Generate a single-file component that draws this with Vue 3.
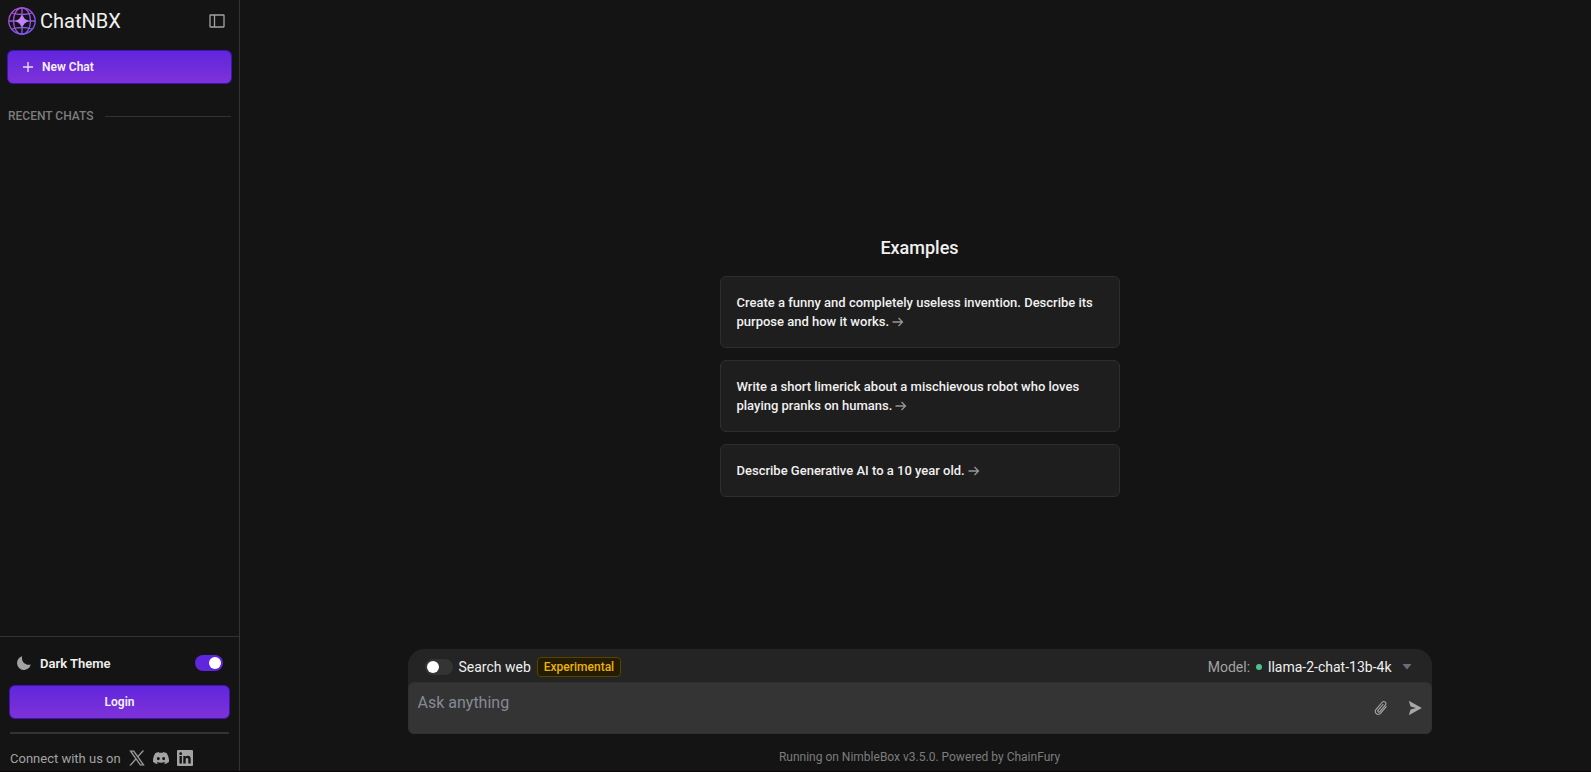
<script setup>
import { ref } from 'vue'

const darkTheme = ref(true)
const searchWeb = ref(false)
const message = ref('')
const examples = [
  'Create a funny and completely useless invention. Describe its purpose and how it works.',
  'Write a short limerick about a mischievous robot who loves playing pranks on humans.',
  'Describe Generative AI to a 10 year old.',
]
</script>

<template>
  <div class="app">
    <aside class="sidebar">
      <header class="brand">
        <svg class="logo" viewBox="0 0 28 28" fill="none" aria-hidden="true">
          <defs>
            <linearGradient id="globe" x1="4" y1="2" x2="24" y2="26" gradientUnits="userSpaceOnUse">
              <stop stop-color="#b04fd8" />
              <stop offset="1" stop-color="#7a5cf0" />
            </linearGradient>
            <linearGradient id="spark" x1="9" y1="9" x2="19" y2="19" gradientUnits="userSpaceOnUse">
              <stop stop-color="#dc7cf4" />
              <stop offset="1" stop-color="#a98bff" />
            </linearGradient>
          </defs>
          <g stroke="url(#globe)" stroke-width="1.3">
            <circle cx="14" cy="14" r="13.2" />
            <ellipse cx="14" cy="14" rx="8.5" ry="13.2" />
            <path d="M14 1v8M14 19v8M1 14h8M19 14h8" />
            <path d="M4 6Q14 9 24 6M4 22Q14 19 24 22" />
          </g>
          <path d="M14 9Q15.500 12.700 19 14Q15.500 15.500 14 19Q12.500 15.500 9 14Q12.500 12.700 14 9Z" fill="url(#spark)" stroke="url(#spark)" stroke-width="1.6" stroke-linejoin="round" />
        </svg>
        <span class="name">ChatNBX</span>
        <button class="icon-button collapse" aria-label="Toggle sidebar">
          <svg width="16" height="14" viewBox="0 0 16 14" fill="none" stroke="#a3a3a3" stroke-width="1.3">
            <rect x="1" y="1" width="14" height="12" rx="0.5" />
            <path d="M5.500 1v12" />
          </svg>
        </button>
      </header>

      <button class="primary new-chat">
        <svg width="12" height="12" viewBox="0 0 12 12" fill="none" stroke="#e4dcf8" stroke-width="1.4" aria-hidden="true"><path d="M6 1v10M1 6h10" /></svg>
        New Chat
      </button>

      <h2 class="recent">RECENT CHATS</h2>

      <div class="sidebar-foot">
        <div class="theme">
          <svg width="16" height="16" viewBox="0 0 16 16" fill="#a3a3a3" aria-hidden="true"><path d="M6.200 1.200C4.900 6.300 9 10.700 14.800 9.600A7 7 0 1 1 6.200 1.200Z" /></svg>
          <label for="theme">Dark Theme</label>
          <input id="theme" v-model="darkTheme" class="switch" type="checkbox" role="switch" />
        </div>
        <button class="primary login">Login</button>
        <hr />
        <div class="social">
          <span>Connect with us on</span>
          <a href="#" aria-label="X">
            <svg width="16" height="16" viewBox="0 0 24 24" fill="#a3a3a3" stroke="#a3a3a3" stroke-width=".6"><path d="M14.100 10.300 22.300 1h-2l-7.100 8.100L7.600 1H1l8.600 12.200L1 23h2l7.500-8.600 6 8.600H23zM11.400 13.300l-.9-1.200L3.700 2.400h3l5.500 7.800.9 1.200 7.200 10.200h-3z" /></svg>
          </a>
          <a href="#" aria-label="Discord">
            <svg width="16" height="16" viewBox="0 0 24 24" fill="#a3a3a3"><path d="M20.300 4.400A19.800 19.800 0 0 0 15.400 2.900l-.6 1.300a18.300 18.300 0 0 0-5.600 0l-.6-1.300a19.700 19.700 0 0 0-4.900 1.500C.5 9-.3 13.600.1 18.100a19.900 19.900 0 0 0 6 3l1.300-2-1.900-.9.400-.4a14.200 14.200 0 0 0 12.200 0l.4.4-1.900.9 1.300 2a19.900 19.900 0 0 0 6-3c.5-5.200-.8-9.700-3.600-13.700ZM8 15.300c-1.200 0-2.200-1.100-2.200-2.400S6.800 10.500 8 10.500s2.200 1.100 2.200 2.400-1 2.400-2.200 2.400Zm8 0c-1.200 0-2.200-1.100-2.200-2.400s1-2.400 2.200-2.400 2.200 1.100 2.200 2.400-1 2.400-2.200 2.400Z" /></svg>
          </a>
          <a href="#" aria-label="LinkedIn">
            <svg width="16" height="16" viewBox="0 0 16 16"><rect width="16" height="16" rx="1" fill="#a3a3a3" /><g fill="#141414"><circle cx="3.700" cy="3.700" r="1.400" /><path d="M2.500 6h2.400v7.600H2.500zM6.300 6h2.300v1.100C9.100 6.300 9.900 5.800 11 5.800c2 0 2.700 1.300 2.700 3.400v4.400h-2.400V9.600c0-1-.3-1.700-1.200-1.700-1 0-1.400.7-1.400 1.700v4H6.300z" /></g></svg>
          </a>
        </div>
      </div>
    </aside>

    <main class="main">
      <section class="examples">
        <h1>Examples</h1>
        <button v-for="item in examples" :key="item" class="card">
          {{ item }}<svg width="12" height="10" viewBox="0 0 12 10" fill="none" stroke="#969696" stroke-width="1.300" aria-hidden="true"><path d="M0.500 5h10M6.500 1l4 4-4 4" /></svg>
        </button>
      </section>

      <form class="composer" @submit.prevent>
        <div class="options">
          <input id="web" v-model="searchWeb" class="switch" type="checkbox" role="switch" />
          <label for="web">Search web</label>
          <span class="badge">Experimental</span>
          <span class="model-label">Model:</span>
          <i class="dot"></i>
          <button type="button" class="model">
            llama-2-chat-13b-4k
            <svg width="10" height="6" viewBox="0 0 10 6" fill="#6b6b80" aria-hidden="true"><path d="M.5 0h9L5 5.500z" /></svg>
          </button>
        </div>
        <div class="entry">
          <textarea v-model="message" rows="1" placeholder="Ask anything" aria-label="Message"></textarea>
          <button type="button" class="icon-button" aria-label="Attach file">
            <svg width="14" height="16" viewBox="0 0 14 16" fill="none" stroke="#a8a8a8" stroke-width="1.100" stroke-linecap="round"><path d="M12.200 6.600 6.700 13.100C5.500 14.500 3.500 14.700 2.300 13.600S1 10.700 2.100 9.400L8 2.500C8.900 1.500 10.300 1.300 11.200 2.100S12.100 4.300 11.300 5.200L5.900 11.600C5.400 12.200 4.700 12.300 4.200 11.900S3.700 10.800 4.200 10.200L9 4.500" /></svg>
          </button>
          <button class="icon-button" aria-label="Send">
            <svg width="14" height="16" viewBox="0 0 14 16" fill="#a8a8a8"><path d="M.8.8 13.800 8 .8 15.200 2.600 9.400 8 8 2.600 6.600z" /></svg>
          </button>
        </div>
      </form>
      <p class="credit">Running on NimbleBox v3.5.0. Powered by ChainFury</p>
    </main>
  </div>
</template>

<style>
body {
  background: #141414;
}
</style>

<style scoped>
.app {
  display: flex;
  min-height: 100vh;
  box-sizing: border-box;
  border-bottom: 1px solid #080606;
  background: #141414;
  color: #f0f0f0;
  font-family: Roboto, "Liberation Sans", sans-serif;
  font-size: 13px;
}
button, textarea {
  font: inherit;
  color: inherit;
  border: 0;
  padding: 0;
  background: none;
}
button {
  cursor: pointer;
}
svg {
  flex: none;
}
.icon-button {
  display: flex;
}

.sidebar {
  display: flex;
  flex-direction: column;
  flex: none;
  width: 240px;
  box-sizing: border-box;
  border-right: 1px solid #333;
}
.brand {
  display: flex;
  align-items: center;
  gap: 4px;
  height: 42px;
  padding: 0 14px 0 8px;
}
.logo {
  width: 28px;
  height: 28px;
}
.name {
  font-size: 20px;
}
.collapse {
  margin-left: auto;
}
.primary {
  display: flex;
  align-items: center;
  height: 34px;
  border: 1px solid #4213b4;
  border-radius: 6px;
  background: linear-gradient(#6026dd, #7e32d8);
  color: #f6f2ff;
  font-size: 12px;
  font-weight: 600;
}
.new-chat {
  margin: 8px 7px 0;
  padding: 0 14px;
  gap: 8px;
}
.recent {
  display: flex;
  align-items: center;
  gap: 12px;
  margin: 24px 8px 0;
  color: #7d7d7d;
  font-size: 12px;
  font-weight: 500;
  line-height: 16px;
}
.recent::after {
  content: "";
  flex: 1;
  height: 1px;
  background: #333;
}
.sidebar-foot {
  margin-top: auto;
  padding: 16px 9px 3px;
  border-top: 1px solid #333;
}
.theme {
  display: flex;
  align-items: center;
  gap: 8px;
  height: 20px;
  padding: 0 7px;
  font-weight: 600;
}
.theme .switch {
  margin-left: auto;
}
.switch {
  appearance: none;
  display: flex;
  flex: none;
  align-items: center;
  width: 28px;
  height: 16px;
  margin: 0;
  padding: 0 2px;
  border-radius: 8px;
  background: #343434;
}
.switch::before {
  content: "";
  width: 12px;
  height: 12px;
  border-radius: 50%;
  background: #fff;
}
.switch:checked {
  justify-content: flex-end;
  background: #6026dd;
}
.login {
  justify-content: center;
  width: 100%;
  margin-top: 12px;
}
hr {
  height: 2px;
  margin: 13px 1px 14px;
  border: 0;
  background: #333;
}
.social {
  display: flex;
  align-items: center;
  gap: 8px;
  height: 20px;
  padding-left: 1px;
  color: #a3a3a3;
}
.social a {
  display: flex;
}

.main {
  display: flex;
  flex: 1;
  flex-direction: column;
  align-items: center;
  min-width: 0;
  padding: 0 0 6px 8px;
}
.examples {
  display: flex;
  flex: 1;
  flex-direction: column;
  justify-content: center;
  gap: 12px;
  width: 400px;
  padding-top: 84px;
}
h1 {
  margin: 0 0 4px;
  font-size: 18px;
  font-weight: 500;
  line-height: 24px;
  text-align: center;
}
.card {
  padding: 16px;
  border: 1px solid #2e2e2e;
  border-radius: 6px;
  background: #1e1e1e;
  font-weight: 500;
  line-height: 19px;
  text-align: left;
}
.card svg {
  margin-left: 3px;
  vertical-align: -1px;
}
.composer {
  width: calc(100% - 32px);
  max-width: 1024px;
  border-radius: 16px 16px 6px 6px;
  background: #242424;
}
.options {
  display: flex;
  align-items: center;
  gap: 6px;
  height: 33px;
  padding: 2px 20px 0 17px;
  box-sizing: border-box;
  font-size: 14px;
}
.badge {
  padding: 0 6px;
  border: 1px solid #564500;
  border-radius: 4px;
  background: #241b00;
  color: #eab308;
  font-size: 12px;
  font-weight: 500;
  line-height: 18px;
}
.model-label {
  margin-left: auto;
  color: #a3a3a3;
}
.dot {
  width: 6px;
  height: 6px;
  border-radius: 50%;
  background: #4cc38a;
}
.model {
  display: flex;
  align-items: center;
  gap: 10px;
}
.entry {
  display: flex;
  align-items: center;
  gap: 20px;
  height: 52px;
  box-sizing: border-box;
  padding: 0 9px;
  border: 1px solid #303030;
  border-radius: 6px;
  background: #343434;
}
textarea {
  flex: 1;
  min-width: 0;
  height: 34px;
  outline: 0;
  resize: none;
  font-size: 16px;
  line-height: 24px;
}
textarea::placeholder {
  color: #858a94;
}
.credit {
  margin: 15px 0 0;
  color: #7d7d7d;
  font-size: 12px;
  line-height: 16px;
}
</style>
